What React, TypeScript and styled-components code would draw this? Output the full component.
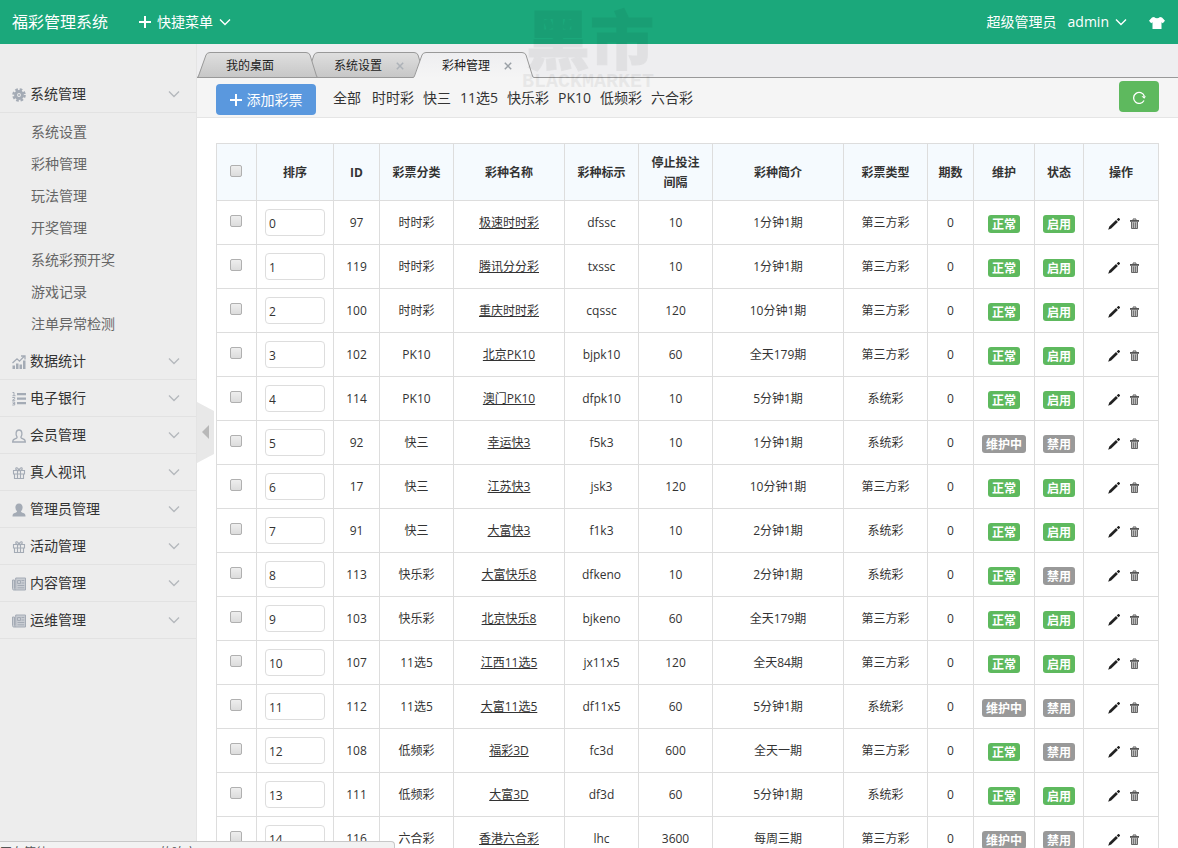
import React from "react";
import styled, { createGlobalStyle, css } from "styled-components";

const GlobalStyle = createGlobalStyle`
  *, *::before, *::after { box-sizing: border-box; }
  body {
    margin: 0;
    background: #fff;
    color: #333;
    font-family: "Open Sans", "Noto Sans CJK SC", sans-serif;
    font-size: 12px;
    line-height: 20px;
  }
  button, input { font: inherit; color: inherit; }
  button { background: none; border: 0; padding: 0; cursor: pointer; }
  a { color: inherit; text-decoration: none; }
`;

const Shell = styled.div`
  position: relative;
  display: flex;
  flex-direction: column;
  height: 100vh;
  overflow: hidden;
`;

const TopBar = styled.header`
  flex: none;
  display: flex;
  align-items: center;
  height: 44px;
  padding: 0 13px 0 12px;
  background: #1ba87b;
  color: #fff;
  font-size: 14px;
`;

const Brand = styled.a`
  margin-right: 31px;
  font-size: 16px;
`;

const BarButton = styled.button`
  display: flex;
  align-items: center;
  gap: 6px;
`;

const Account = styled.div`
  display: flex;
  align-items: center;
  gap: 11px;
  margin-left: auto;
`;

const SkinButton = styled.button`
  display: flex;
  margin: 2px 0 0 11px;
`;

const Body = styled.div`
  flex: 1;
  display: flex;
  min-height: 0;
`;

const Sidebar = styled.nav`
  flex: none;
  position: relative;
  width: 197px;
  padding-top: 32px;
  background: #ededed;
  border-right: 1px solid #e4e4e4;
`;

const GroupButton = styled.button`
  display: flex;
  align-items: center;
  width: 100%;
  height: 37px;
  padding: 0 16px 0 12px;
  border-bottom: 1px solid #e2e2e2;
  font-size: 14px;
  text-align: left;

  svg:last-child { margin-left: auto; }
`;

const GroupIcon = styled.svg`
  flex: none;
  width: 14px;
  height: 14px;
  margin: 2px 4px 0 0;
  color: #a4abb5;
`;

const SubMenu = styled.ul`
  margin: 0;
  padding: 3px 0;
  list-style: none;
`;

const SubLink = styled.a`
  display: block;
  padding: 6px 0 6px 31px;
  color: #666;
  font-size: 14px;
`;

const FoldHandle = styled.button`
  position: absolute;
  top: 358px;
  left: 197px;
  z-index: 2;
  display: flex;
`;

const Main = styled.main`
  flex: 1;
  display: flex;
  flex-direction: column;
  min-width: 0;
`;

const TabStrip = styled.div`
  flex: none;
  display: flex;
  align-items: flex-end;
  height: 34px;
  background: linear-gradient(#999, #999) bottom / 100% 1px no-repeat #eeeef0;
`;

const Tab = styled.div<{ $order: number }>`
  position: relative;
  z-index: ${(p) => p.$order};
  display: flex;
  align-items: center;
  width: 121px;
  height: 26px;
  padding: 2px 22px 0 29px;
  isolation: isolate;

  & + & { margin-left: -13px; }
`;

const TabShape = styled.svg`
  position: absolute;
  inset: 0;
  z-index: -1;
`;

const TabLabel = styled.button`
  color: #222;
`;

const TabClose = styled.button`
  display: flex;
  margin-left: auto;
`;

const Tools = styled.div`
  flex: none;
  display: flex;
  align-items: center;
  height: 40px;
  padding: 0 19px;
  background: #f5f5f5;
  border-bottom: 1px solid #e5e5e5;
  font-size: 14px;
`;

const solidButton = css`
  display: flex;
  align-items: center;
  justify-content: center;
  height: 31px;
  border-radius: 4px;
  color: #fff;
`;

const AddButton = styled.button`
  ${solidButton}
  gap: 5px;
  width: 100px;
  margin: 4px 17px 0 0;
  background: #5a98de;
`;

const RefreshButton = styled.button`
  ${solidButton}
  width: 40px;
  margin: 0 0 2px auto;
  background: #5eb95e;
`;

const Filters = styled.div`
  display: flex;
  gap: 9px;
`;

const FilterLink = styled.a<{ $wide?: boolean }>`
  margin-right: ${(p) => (p.$wide ? 2 : 0)}px;
`;

const Scroller = styled.div`
  flex: 1;
  min-height: 0;
  overflow: auto;
  padding: 25px 19px;
  scrollbar-width: none;
`;

const Table = styled.table`
  width: 100%;
  border-collapse: collapse;
  table-layout: fixed;
  text-align: center;

  th, td {
    height: 44px;
    padding: 0 8px;
    border: 1px solid #ddd;
  }
  th {
    height: 57px;
    padding-top: 2px;
    background: #f5fafe;
  }
`;

const Tick = styled.input`
  appearance: none;
  display: block;
  width: 12px;
  height: 12px;
  margin: 0 0 4px 5px;
  border: 1px solid #b0b0b0;
  border-radius: 2px;
  background: linear-gradient(#eee, #dcdcdc);
`;

const SortInput = styled.input`
  display: block;
  width: 60px;
  height: 27px;
  padding: 1px 3px 0;
  border: 1px solid #ddd;
  border-radius: 4px;
  background: #fff;
`;

const NameLink = styled.a`
  text-decoration: underline;
`;

const Badge = styled.span<{ $on: boolean }>`
  display: inline-block;
  margin-top: 3px;
  padding: 1px 4px 0;
  border-radius: 3px;
  background: ${(p) => (p.$on ? "#5eb95e" : "#999")};
  color: #fff;
  font-weight: 700;
  line-height: 17px;
  vertical-align: middle;
`;

const Actions = styled.div`
  display: flex;
  justify-content: center;
  gap: 10px;
  padding: 3px 0 0 4px;
`;

const IconButton = styled.button`
  display: flex;
`;

const Watermark = styled.div`
  position: absolute;
  top: 6px;
  left: 522px;
  z-index: 5;
  opacity: 0.05;
  color: #000;
  text-align: center;
  font-weight: 900;
  pointer-events: none;
`;

const MarkTitle = styled.div`
  padding-left: 4px;
  font-size: 64px;
  line-height: 68px;
  -webkit-text-stroke: 1px #000;
`;

const MarkCaption = styled.div`
  font-family: "Liberation Mono", monospace;
  font-size: 20px;
  line-height: 16px;
`;

const StatusBubble = styled.div`
  position: absolute;
  left: 0;
  bottom: 0;
  z-index: 6;
  display: flex;
  gap: 112px;
  width: 395px;
  height: 7px;
  overflow: hidden;
  padding-top: 1px;
  border: 1px solid #c8c8c8;
  border-width: 1px 1px 0 0;
  border-radius: 0 4px 0 0;
  background: #f2f2f2;
  color: #555;
`;

const Chevron = ({ color = "#fff" }: { color?: string }) => (
  <svg width="12" height="8" viewBox="0 0 12 8" fill="none" stroke={color} strokeWidth="1.4" aria-hidden="true">
    <path d="M1 1.5 6 6.5 11 1.5" />
  </svg>
);

const Plus = () => (
  <svg width="12" height="12" viewBox="0 0 12 12" stroke="#fff" strokeWidth="2" aria-hidden="true">
    <path d="M6 0v12M0 6h12" />
  </svg>
);

const icons: Record<string, React.ReactNode> = {
  gear: (
    <>
      <circle cx="7" cy="7" r="3.4" fill="none" stroke="currentColor" strokeWidth="3" />
      <circle cx="7" cy="7" r="5.6" fill="none" stroke="currentColor" strokeWidth="2.4" strokeDasharray="2.6 1.8" />
      <circle cx="7" cy="7" r="1" fill="currentColor" />
    </>
  ),
  chart: (
    <>
      <path d="M.5 10.500h2.500V14H.5zM4 8.500h2.500V14H4zM7.500 9.500h2.500V14H7.500zM11 5.500h2.500V14H11z" fill="currentColor" />
      <path d="M.5 8 5 3.800l2.500 2.400L12 1.500M9 1h4v3.500" fill="none" stroke="currentColor" strokeWidth="1.300" />
    </>
  ),
  list: (
    <>
      <path d="M5 1h9v2.200H5zM5 5.500h9v2.200H5zM5 10h9v2.200H5z" fill="currentColor" />
      <path d="M.5.5H2v3M.5 3.700h3M.3 5.500h2.400v1.300L.5 8.300h2.700M.3 10h2.400v3H.3M.8 11.500h2" fill="none" stroke="currentColor" />
    </>
  ),
  user: (
    <path
      d="M5 7.800C3.500 5.500 3.600 1 7 1s3.500 4.500 2 6.800c-.3 1 .3 1.600 2 2 1.700.5 2.300 1.200 2.300 3.200H.7c0-2 .6-2.700 2.300-3.200 1.700-.4 2.300-1 2-2Z"
      fill="none"
      stroke="currentColor"
      strokeWidth="1.300"
    />
  ),
  userSolid: (
    <path
      d="M5 8.200C2.500 6 2.700.5 7 .5s4.500 5.500 2 7.700c0 1 1 1.400 2.300 1.700 1.800.5 2.200 1.300 2.200 3.600H.5c0-2.300.4-3.100 2.200-3.600C4 9.600 5 9.200 5 8.200Z"
      fill="currentColor"
    />
  ),
  gift: (
    <path
      d="M1.500 4.500h11v3.500h-11zM2.500 8v4.500h9V8M5.500 4.500v8M8.500 4.500v8M6.800 4.300C5 4.300 3.500 3.800 3.800 2.500 4.300 1.200 6.300 1.700 7 4.300 7.700 1.700 9.700 1.200 10.200 2.500 10.500 3.800 9 4.300 7.200 4.300"
      fill="none"
      stroke="currentColor"
      strokeWidth="1.100"
    />
  ),
  news: (
    <>
      <path d="M3.700 1h9.800v12H2C1 13 .5 12.500.5 11.500V3h2v8.500c0 1.500 1.200 1.500 1.200 0Z" fill="#c9cdd3" stroke="currentColor" />
      <path d="M5.500 3.500h3v3h-3zM9.500 3.500h2.800M9.500 6h2.800M5.500 8.500h6.800M5.500 10.800h6.800" fill="none" stroke="currentColor" />
    </>
  ),
};

const Pencil = () => (
  <svg width="12" height="12" viewBox="0 0 12 12" fill="#222" aria-hidden="true">
    <path d="M8.700 1.400 10 .3c.4-.4.800-.4 1.200 0l.6.600c.4.400.4.800 0 1.200l-1.200 1.200ZM8 2.100l1.900 1.900-6.700 6.500L.2 11.800l1.100-3.200Z" />
  </svg>
);

const Trash = () => (
  <svg width="9" height="12" viewBox="0 0 9 12" aria-hidden="true">
    <path d="M3 1.800V1h3v.8" fill="none" stroke="#555" />
    <path d="M0 2h9v1.800H0z" fill="#555" />
    <path d="M1.500 4v6.500h6V4" fill="#bbb" stroke="#666" />
    <path d="M3.500 4.500v5.500M5.500 4.500v5.500" fill="none" stroke="#777" />
  </svg>
);

const tabs = [
  { label: "我的桌面", closable: false },
  { label: "系统设置", closable: true },
  { label: "彩种管理", closable: true, active: true },
];

const settings = ["系统设置", "彩种管理", "玩法管理", "开奖管理", "系统彩预开奖", "游戏记录", "注单异常检测"];

const groups: [string, string][] = [
  ["数据统计", "chart"],
  ["电子银行", "list"],
  ["会员管理", "user"],
  ["真人视讯", "gift"],
  ["管理员管理", "userSolid"],
  ["活动管理", "gift"],
  ["内容管理", "news"],
  ["运维管理", "news"],
];

const filters = ["全部", "时时彩", "快三", "11选5", "快乐彩", "PK10", "低频彩", "六合彩"];

const columns: [string, number][] = [
  ["排序", 77],
  ["ID", 46],
  ["彩票分类", 74],
  ["彩种名称", 111],
  ["彩种标示", 74],
  ["停止投注间隔", 74],
  ["彩种简介", 131],
  ["彩票类型", 84],
  ["期数", 46],
  ["维护", 61],
  ["状态", 49],
  ["操作", 75],
];

type Row = [number, string, string, string, number, string, string, boolean, boolean];

const rows: Row[] = [
  [97, "时时彩", "极速时时彩", "dfssc", 10, "1分钟1期", "第三方彩", true, true],
  [119, "时时彩", "腾讯分分彩", "txssc", 10, "1分钟1期", "第三方彩", true, true],
  [100, "时时彩", "重庆时时彩", "cqssc", 120, "10分钟1期", "第三方彩", true, true],
  [102, "PK10", "北京PK10", "bjpk10", 60, "全天179期", "第三方彩", true, true],
  [114, "PK10", "澳门PK10", "dfpk10", 10, "5分钟1期", "系统彩", true, true],
  [92, "快三", "幸运快3", "f5k3", 10, "1分钟1期", "系统彩", false, false],
  [17, "快三", "江苏快3", "jsk3", 120, "10分钟1期", "第三方彩", true, true],
  [91, "快三", "大富快3", "f1k3", 10, "2分钟1期", "系统彩", true, true],
  [113, "快乐彩", "大富快乐8", "dfkeno", 10, "2分钟1期", "系统彩", true, false],
  [103, "快乐彩", "北京快乐8", "bjkeno", 60, "全天179期", "第三方彩", true, true],
  [107, "11选5", "江西11选5", "jx11x5", 120, "全天84期", "第三方彩", true, true],
  [112, "11选5", "大富11选5", "df11x5", 60, "5分钟1期", "系统彩", false, false],
  [108, "低频彩", "福彩3D", "fc3d", 600, "全天一期", "第三方彩", true, false],
  [111, "低频彩", "大富3D", "df3d", 60, "5分钟1期", "系统彩", true, true],
  [116, "六合彩", "香港六合彩", "lhc", 3600, "每周三期", "第三方彩", false, false],
];

const GroupHeading = ({ label, icon }: { label: string; icon: string }) => (
  <GroupButton>
    <GroupIcon viewBox="0 0 14 14" aria-hidden="true">{icons[icon]}</GroupIcon>
    {label}
    <Chevron color="#b5b9bd" />
  </GroupButton>
);

const PageTab = ({ label, closable, active, order }: { label: string; closable: boolean; active?: boolean; order: number }) => (
  <Tab $order={order}>
    <TabShape width="121" height="26" viewBox="0 0 121 26" aria-hidden="true">
      <defs>
        <linearGradient id={`tab-${order}`} x1="0" y1="0" x2="0" y2="1">
          <stop offset="0" stopColor={active ? "#eeeef0" : "#dfdfdf"} />
          <stop offset="1" stopColor={active ? "#f5f5f5" : "#c6c6c6"} />
        </linearGradient>
      </defs>
      <path d="M0 26 L1 24.500 9 3Q10 .5 13 .5H109Q112 .5 113 3L120 24 121 26Z" fill={`url(#tab-${order})`} />
      <path
        d={`M0 25.500Q1 25.500 1.500 24L9 3Q10 .5 13 .5H109Q112 .5 113 3L119.500 24Q120 25.500 121 25.500${active ? "" : "H0"}`}
        fill="none"
        stroke="#999"
      />
    </TabShape>
    <TabLabel>{label}</TabLabel>
    {closable && (
      <TabClose aria-label={`关闭${label}`}>
        <svg width="8" height="8" viewBox="0 0 8 8" stroke={active ? "#9aa0a6" : "#adb2b8"} strokeWidth="1.500" aria-hidden="true">
          <path d="M.8.8l6.400 6.400M7.200.8.8 7.200" />
        </svg>
      </TabClose>
    )}
  </Tab>
);

export default function App() {
  return (
    <Shell>
      <GlobalStyle />
      <TopBar>
        <Brand href="#">福彩管理系统</Brand>
        <BarButton>
          <Plus />
          快捷菜单
          <Chevron />
        </BarButton>
        <Account>
          <span>超级管理员</span>
          <BarButton>
            admin
            <Chevron />
          </BarButton>
          <SkinButton aria-label="换肤">
            <svg width="16" height="12" viewBox="0 0 16 12" fill="#fff" aria-hidden="true">
              <path d="M5 0Q8 2.600 11 0L13 .4 16 3.800 13.800 6.200 12.500 5.200V12H3.500V5.200L2.200 6.200 0 3.800 3 .4Z" />
            </svg>
          </SkinButton>
        </Account>
      </TopBar>

      <Body>
        <Sidebar>
          <GroupHeading label="系统管理" icon="gear" />
          <SubMenu>
            {settings.map((s) => (
              <li key={s}>
                <SubLink href="#">{s}</SubLink>
              </li>
            ))}
          </SubMenu>
          {groups.map(([label, icon]) => (
            <GroupHeading key={label} label={label} icon={icon} />
          ))}
          <FoldHandle aria-label="收起菜单">
            <svg width="17" height="62" viewBox="0 0 17 62" aria-hidden="true">
              <path d="M0 0 17 9V52L0 61Z" fill="#e8e8e8" />
              <path d="M12 23V37L5 30Z" fill="#b8b8b8" />
            </svg>
          </FoldHandle>
        </Sidebar>

        <Main>
          <TabStrip>
            {tabs.map((t, i) => (
              <PageTab key={t.label} {...t} order={t.active ? 4 : 3 - i} />
            ))}
          </TabStrip>
          <Tools>
            <AddButton>
              <Plus />
              添加彩票
            </AddButton>
            <Filters>
              {filters.map((f, i) => (
                <FilterLink key={f} href="#" $wide={i === 0}>
                  {f}
                </FilterLink>
              ))}
            </Filters>
            <RefreshButton aria-label="刷新">
              <svg width="14" height="14" viewBox="0 0 14 14" fill="none" stroke="#fff" strokeWidth="1.300" aria-hidden="true">
                <path d="M12 10.500A5.500 5.500 0 1 1 12.300 6" />
                <path d="M9.500 6.300h4.400L12.300 8.800Z" fill="#fff" stroke="none" />
              </svg>
            </RefreshButton>
          </Tools>
          <Scroller>
            <Table>
              <colgroup>
                <col style={{ width: 40 }} />
                {columns.map(([name, width]) => (
                  <col key={name} style={{ width }} />
                ))}
              </colgroup>
              <thead>
                <tr>
                  <th>
                    <Tick type="checkbox" aria-label="全选" />
                  </th>
                  {columns.map(([name]) => (
                    <th key={name}>{name}</th>
                  ))}
                </tr>
              </thead>
              <tbody>
                {rows.map(([id, kind, name, code, gap, intro, type, normal, enabled], i) => (
                  <tr key={id}>
                    <td>
                      <Tick type="checkbox" aria-label={`选择${name}`} />
                    </td>
                    <td>
                      <SortInput defaultValue={i} aria-label={`${name}排序`} />
                    </td>
                    <td>{id}</td>
                    <td>{kind}</td>
                    <td>
                      <NameLink href="#">{name}</NameLink>
                    </td>
                    <td>{code}</td>
                    <td>{gap}</td>
                    <td>{intro}</td>
                    <td>{type}</td>
                    <td>0</td>
                    <td>
                      <Badge $on={normal}>{normal ? "正常" : "维护中"}</Badge>
                    </td>
                    <td>
                      <Badge $on={enabled}>{enabled ? "启用" : "禁用"}</Badge>
                    </td>
                    <td>
                      <Actions>
                        <IconButton aria-label={`编辑${name}`}>
                          <Pencil />
                        </IconButton>
                        <IconButton aria-label={`删除${name}`}>
                          <Trash />
                        </IconButton>
                      </Actions>
                    </td>
                  </tr>
                ))}
              </tbody>
            </Table>
          </Scroller>
        </Main>
      </Body>

      <Watermark aria-hidden="true">
        <MarkTitle>黑市</MarkTitle>
        <MarkCaption>BLACKMARKET</MarkCaption>
      </Watermark>
      <StatusBubble role="status">
        <span>正在等待</span>
        <span>的响应…</span>
      </StatusBubble>
    </Shell>
  );
}
